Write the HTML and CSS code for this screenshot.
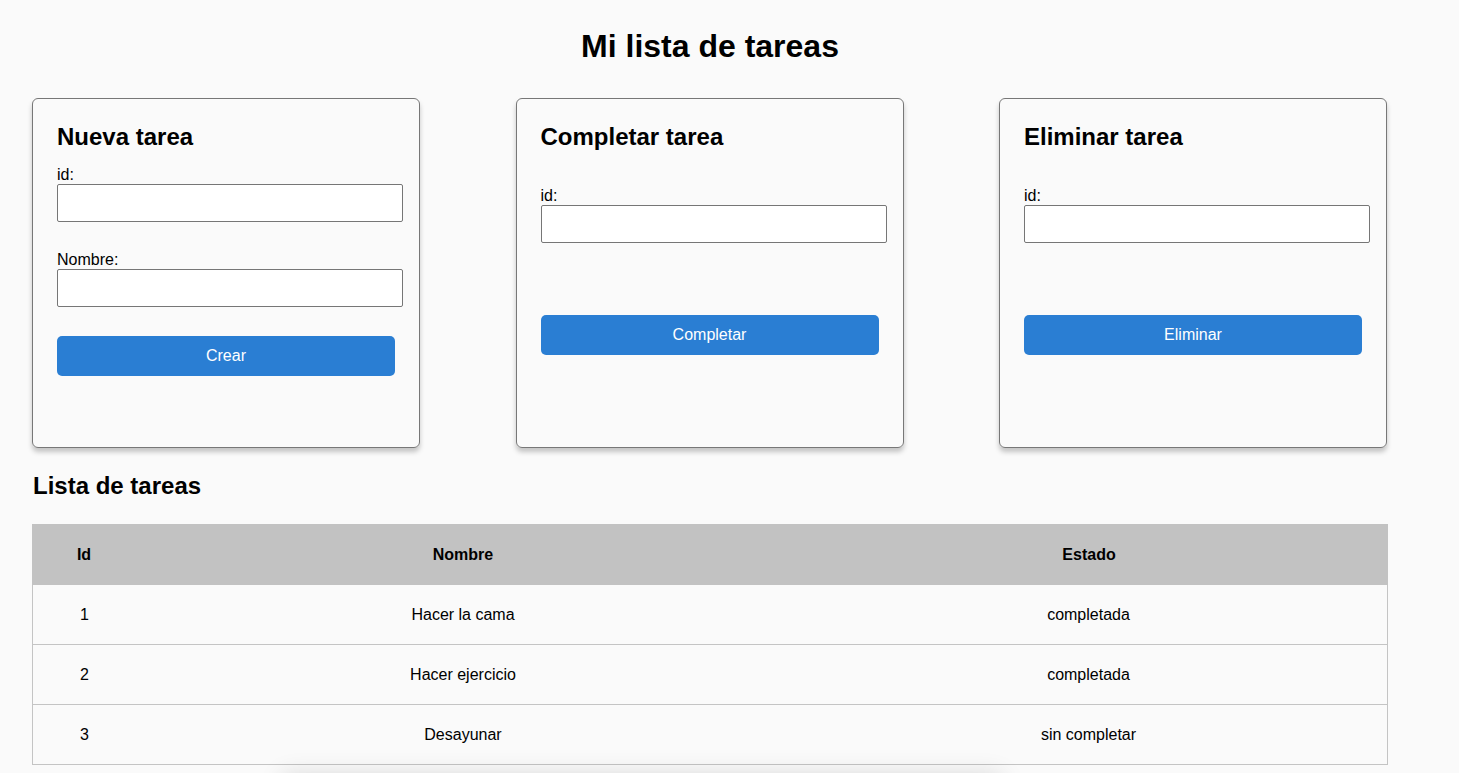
FILE: index.html
```html
<!DOCTYPE html>
<html lang="es">
<head>
<meta charset="utf-8">
<title>Mi lista de tareas</title>
<link rel="stylesheet" href="styles.css">
</head>
<body>
<div class="page">
  <h1 class="title">Mi lista de tareas</h1>
  <div class="cards">
    <form class="card">
      <h2 class="card-title">Nueva tarea</h2>
      <label class="label first">id:</label>
      <input class="input" type="text">
      <label class="label next">Nombre:</label>
      <input class="input" type="text">
      <button class="btn btn-crear" type="button">Crear</button>
    </form>
    <form class="card">
      <h2 class="card-title">Completar tarea</h2>
      <label class="label lone">id:</label>
      <input class="input" type="text">
      <button class="btn btn-lone" type="button">Completar</button>
    </form>
    <form class="card">
      <h2 class="card-title">Eliminar tarea</h2>
      <label class="label lone">id:</label>
      <input class="input" type="text">
      <button class="btn btn-lone" type="button">Eliminar</button>
    </form>
  </div>
  <h2 class="list-title">Lista de tareas</h2>
  <table class="tasks">
    <colgroup>
      <col class="c-id">
      <col class="c-name">
      <col class="c-state">
    </colgroup>
    <thead>
      <tr><th>Id</th><th>Nombre</th><th>Estado</th></tr>
    </thead>
    <tbody>
      <tr><td>1</td><td>Hacer la cama</td><td>completada</td></tr>
      <tr><td>2</td><td>Hacer ejercicio</td><td>completada</td></tr>
      <tr><td>3</td><td>Desayunar</td><td>sin completar</td></tr>
    </tbody>
  </table>
  <div class="below"></div>
</div>
</body>
</html>
```
FILE: styles.css
```css
html, body {
  margin: 0;
  padding: 0;
  background: #fafafa;
  color: #000;
  font-family: "Liberation Sans", Arial, sans-serif;
}

.page {
  width: 1356px;
  padding: 28px 0 40px 32px;
}

.title {
  margin: 0;
  font-size: 32px;
  line-height: 37px;
  font-weight: bold;
  text-align: center;
}

.cards {
  display: flex;
  gap: 95.5px;
  margin-top: 33px;
}

.card {
  width: 388px;
  height: 350px;
  box-sizing: border-box;
  border: 1px solid #777;
  border-radius: 6px;
  padding: 24px 24px;
  margin: 0;
  box-shadow: 0 4px 5px rgba(0, 0, 0, 0.22);
}

.card-title {
  margin: 0;
  font-size: 24px;
  line-height: 28px;
  font-weight: bold;
}

.label {
  display: block;
  font-size: 16px;
  line-height: 19px;
}
.label.first { margin-top: 14px; }
.label.next { margin-top: 28px; }
.label.lone { margin-top: 35px; }

.input {
  display: block;
  box-sizing: border-box;
  width: calc(100% + 8px);
  height: 38px;
  margin: 0;
  padding: 0 4px;
  border: 1px solid #767676;
  border-radius: 2px;
  background: #fff;
  font-family: inherit;
  font-size: 16px;
}

.btn {
  display: block;
  width: 100%;
  height: 40px;
  border: none;
  border-radius: 5px;
  background: #2a7ed3;
  color: #fff;
  font-family: inherit;
  font-size: 16px;
  padding: 0;
}
.btn-crear { margin-top: 29px; }
.btn-lone { margin-top: 72px; }

.list-title {
  margin: 24px 0 0 1px;
  font-size: 24px;
  line-height: 28px;
  font-weight: bold;
}

.tasks {
  margin-top: 24px;
  width: 100%;
  table-layout: fixed;
  border-collapse: separate;
  border-spacing: 0;
  font-size: 16px;
}

.c-id { width: 104px; }
.c-name { width: 654px; }
.c-state { width: 598px; }

.tasks th {
  background: #c2c2c2;
  line-height: 61px;
  padding: 0;
  font-weight: bold;
  text-align: center;
}

.tasks td {
  line-height: 59px;
  padding: 0;
  text-align: center;
  border-bottom: 1px solid #c4c4c4;
}
.tasks td:first-child { border-left: 1px solid #c4c4c4; }
.tasks td:last-child { border-right: 1px solid #c4c4c4; }

.below {
  width: 720px;
  height: 60px;
  margin: 10px 0 0 250px;
  background: #fafafa;
  box-shadow: 0 0 24px rgba(0, 0, 0, 0.14);
}
```
